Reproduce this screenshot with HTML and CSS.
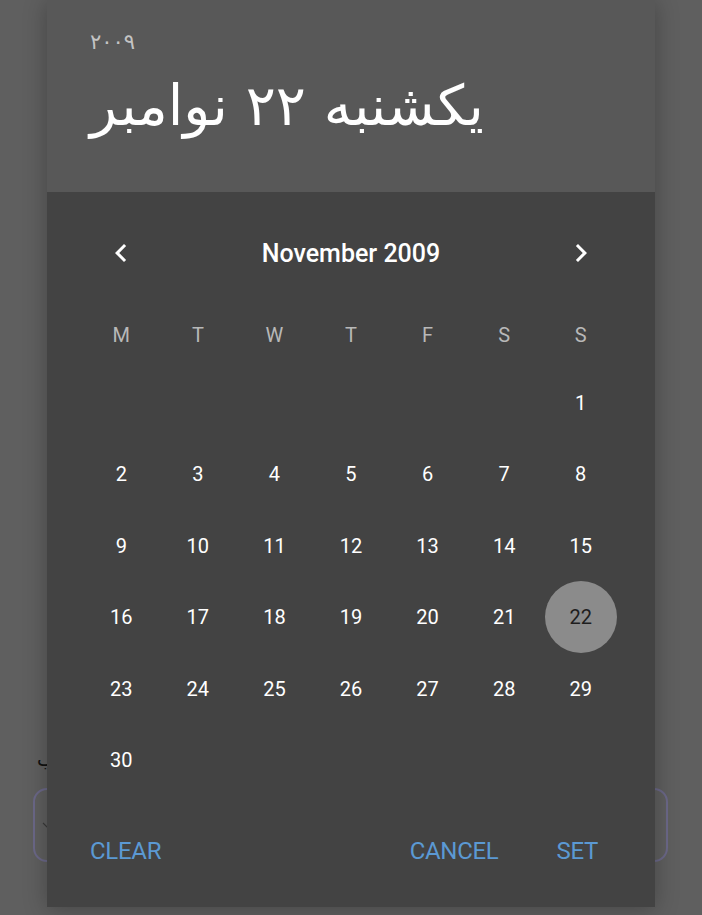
FILE: index.html
```html
<!DOCTYPE html>
<html lang="fa">
<head>
<meta charset="utf-8">
<link rel="stylesheet" href="styles.css">
</head>
<body>
<div class="page">
  <div class="field-label" dir="rtl">انتخاب</div>
  <div class="field-box">
    <svg class="field-arrow" viewBox="0 0 12 12" width="12" height="12"><path d="M2 4l4 4 4-4" fill="none" stroke="#3a3a3a" stroke-width="1.2"/></svg>
  </div>
</div>

<div class="dialog">
  <div class="dlg-head">
    <div class="dlg-year" dir="rtl">۲۰۰۹</div>
    <div class="dlg-date" dir="rtl">یکشنبه ۲۲ نوامبر</div>
  </div>
  <div class="dlg-body">
    <div class="nav">
      <div class="nav-btn">
        <svg viewBox="0 0 24 24" width="36" height="36"><path d="M15.41 7.41L14 6l-6 6 6 6 1.41-1.41L10.83 12z" fill="#fff"/></svg>
      </div>
      <div class="nav-title">November 2009</div>
      <div class="nav-btn">
        <svg viewBox="0 0 24 24" width="36" height="36"><path d="M10 6L8.59 7.41 13.17 12l-4.58 4.59L10 18l6-6z" fill="#fff"/></svg>
      </div>
    </div>
    <div class="weekdays">
      <span>M</span><span>T</span><span>W</span><span>T</span><span>F</span><span>S</span><span>S</span>
    </div>
    <div class="days">
      <span></span><span></span><span></span><span></span><span></span><span></span><span>1</span>
      <span>2</span><span>3</span><span>4</span><span>5</span><span>6</span><span>7</span><span>8</span>
      <span>9</span><span>10</span><span>11</span><span>12</span><span>13</span><span>14</span><span>15</span>
      <span>16</span><span>17</span><span>18</span><span>19</span><span>20</span><span>21</span><span class="sel"><b>22</b></span>
      <span>23</span><span>24</span><span>25</span><span>26</span><span>27</span><span>28</span><span>29</span>
      <span>30</span>
    </div>
    <div class="actions">
      <span class="act">CLEAR</span>
      <span class="spacer"></span>
      <span class="act">CANCEL</span>
      <span class="act set">SET</span>
    </div>
  </div>
</div>
</body>
</html>
```

FILE: styles.css
```css
html, body {
  margin: 0;
  padding: 0;
}
body {
  width: 702px;
  height: 915px;
  overflow: hidden;
  background: #5f5f5f;
  font-family: Roboto, "Liberation Sans", sans-serif;
  position: relative;
}
.page {
  padding: 744px 34px 0 33px;
}
.field-label {
  font-family: "DejaVu Sans", sans-serif;
  font-size: 19px;
  color: #111;
  text-align: left;
  padding-left: 4px;
  height: 44px;
  line-height: 30px;
}
.field-box {
  height: 70px;
  border: 2px solid #6b6888;
  border-radius: 14px;
  display: flex;
  align-items: center;
  padding-left: 6px;
}
.dialog {
  position: absolute;
  left: 47px;
  top: 0;
  width: 608px;
  height: 907px;
  box-shadow: 0 2px 22px rgba(0, 0, 0, 0.28);
  display: flex;
  flex-direction: column;
}
.dlg-head {
  height: 192px;
  background: #585858;
  box-sizing: border-box;
  padding: 26px 43px 0;
}
.dlg-year {
  font-family: "DejaVu Sans", sans-serif;
  font-size: 21px;
  color: #c4c4c4;
  text-align: left;
  line-height: 32px;
}
.dlg-date {
  font-family: "DejaVu Sans", sans-serif;
  font-size: 56px;
  color: #fff;
  text-align: left;
  line-height: 80px;
  margin-top: 8px;
}
.dlg-body {
  flex: 1;
  background: #434343;
  padding: 0 36px;
  display: flex;
  flex-direction: column;
}
.nav {
  margin-top: 37px;
  height: 48px;
  display: grid;
  grid-template-columns: 76.6px 1fr 76.6px;
  align-items: center;
}
.nav-btn {
  display: flex;
  justify-content: center;
  align-items: center;
}
.nav-title {
  text-align: center;
  color: #fff;
  font-size: 25px;
  font-weight: 500;
}
.weekdays, .days {
  display: grid;
  grid-template-columns: repeat(7, 1fr);
}
.weekdays {
  margin-top: 34px;
  height: 48px;
  align-items: center;
}
.weekdays span {
  text-align: center;
  color: #b8b8b8;
  font-size: 20px;
}
.days {
  margin-top: 8px;
  grid-auto-rows: 71.5px;
}
.days span {
  display: flex;
  justify-content: center;
  align-items: center;
  color: #fff;
  font-size: 20px;
}
.days .sel b {
  font-weight: 400;
  width: 72px;
  height: 72px;
  border-radius: 50%;
  background: #8b8b8b;
  color: #1e1e1e;
  display: flex;
  justify-content: center;
  align-items: center;
}
.actions {
  margin-top: 37px;
  display: flex;
  align-items: center;
  height: 36px;
  padding: 0 21px 0 7px;
}
.act {
  color: #5b99d3;
  font-size: 24px;
  font-weight: 400;
  letter-spacing: -0.3px;
}
.spacer {
  flex: 1;
}
.set {
  margin-left: 58px;
}
```
